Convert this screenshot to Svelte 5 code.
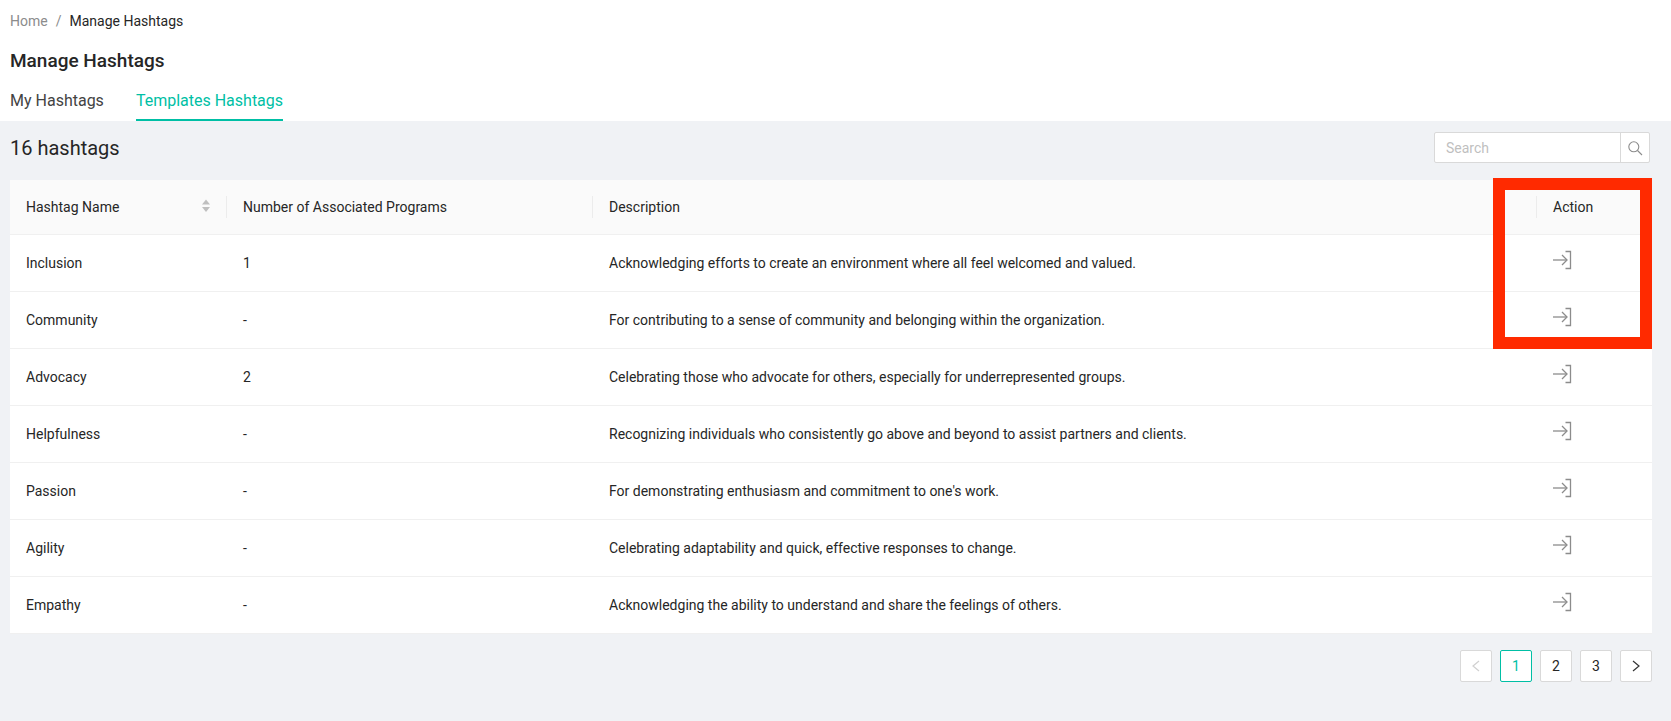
<script>
	const rows = [
		{ name: 'Inclusion', count: '1', desc: 'Acknowledging efforts to create an environment where all feel welcomed and valued.' },
		{ name: 'Community', count: '-', desc: 'For contributing to a sense of community and belonging within the organization.' },
		{ name: 'Advocacy', count: '2', desc: 'Celebrating those who advocate for others, especially for underrepresented groups.' },
		{ name: 'Helpfulness', count: '-', desc: 'Recognizing individuals who consistently go above and beyond to assist partners and clients.' },
		{ name: 'Passion', count: '-', desc: "For demonstrating enthusiasm and commitment to one's work." },
		{ name: 'Agility', count: '-', desc: 'Celebrating adaptability and quick, effective responses to change.' },
		{ name: 'Empathy', count: '-', desc: 'Acknowledging the ability to understand and share the feelings of others.' }
	];
</script>

<div class="page">
	<header class="top">
		<nav class="crumbs">
			<span class="muted">Home</span>
			<span class="muted sep">/</span>
			<span>Manage Hashtags</span>
		</nav>
		<h1>Manage Hashtags</h1>
		<div class="tabs">
			<span class="tab">My Hashtags</span>
			<span class="tab active">Templates Hashtags</span>
		</div>
	</header>

	<main class="body">
		<div class="toolbar">
			<span class="total">16 hashtags</span>
			<div class="search">
				<span class="placeholder">Search</span>
				<span class="search-btn">
					<svg width="16" height="16" viewBox="0 0 16 16" fill="none" stroke="#8c8c8c" stroke-width="1.1">
						<circle cx="6.8" cy="6.8" r="5" />
						<path d="M10.5 10.5 L15 15" />
					</svg>
				</span>
			</div>
		</div>

		<div class="table">
			<div class="row head">
				<div class="cell c1">
					Hashtag Name
					<svg class="sort" width="10" height="14" viewBox="0 0 10 14" fill="#bfbfbf">
						<path d="M5 0.5 L9 5.5 H1 Z" />
						<path d="M5 13 L9 8 H1 Z" />
					</svg>
				</div>
				<div class="cell c2">Number of Associated Programs</div>
				<div class="cell c3">Description</div>
				<div class="cell c4">Action</div>
			</div>
			{#each rows as r}
				<div class="row">
					<div class="cell c1">{r.name}</div>
					<div class="cell c2">{r.count}</div>
					<div class="cell c3">{r.desc}</div>
					<div class="cell c4">
						<svg class="go" width="20" height="20" viewBox="0 0 20 20" fill="none" stroke="#8c8c8c" stroke-width="1.3">
							<path d="M0 10 H13.5" />
							<path d="M9 5 L14 10 L9 15" />
							<path d="M12.5 1.5 H17.5 V18.5 H12.5" />
						</svg>
					</div>
				</div>
			{/each}
		</div>

		<div class="pager">
			<span class="pg off">
				<svg width="10" height="12" viewBox="0 0 10 12" fill="none" stroke="#d0d0d0" stroke-width="1.2"><path d="M8 1 L2 6 L8 11" /></svg>
			</span>
			<span class="pg current">1</span>
			<span class="pg">2</span>
			<span class="pg">3</span>
			<span class="pg">
				<svg width="10" height="12" viewBox="0 0 10 12" fill="none" stroke="#333" stroke-width="1.2"><path d="M2 1 L8 6 L2 11" /></svg>
			</span>
		</div>
	</main>

	<div class="marker"></div>
</div>

<style>
	:global(body) {
		margin: 0;
		background: #f0f2f5;
	}

	.page {
		position: relative;
		height: 721px;
		overflow: hidden;
		font-family: Roboto, 'Noto Sans', sans-serif;
		font-size: 14px;
		color: #262626;
		background: #f0f2f5;
	}

	.top {
		background: #fff;
		height: 121px;
		padding: 13px 10px 0;
		box-sizing: border-box;
	}

	.crumbs {
		display: flex;
		gap: 8px;
		line-height: 17px;
		font-size: 14px;
	}

	.muted {
		color: #8c8c8c;
	}

	h1 {
		margin: 18px 0 0;
		font-size: 19px;
		line-height: 26px;
		font-weight: 500;
		color: #262626;
	}

	.tabs {
		display: flex;
		gap: 32px;
		margin-top: 16px;
	}

	.tab {
		font-size: 16px;
		line-height: 22px;
		height: 29px;
		color: #434343;
	}

	.active {
		color: #00bfa5;
		border-bottom: 2px solid #00bfa5;
	}

	.toolbar {
		display: flex;
		align-items: center;
		justify-content: space-between;
		height: 59px;
		padding: 0 21px 6px 10px;
		box-sizing: border-box;
	}

	.total {
		font-size: 20px;
		color: #262626;
	}

	.search {
		display: flex;
		width: 216px;
		height: 31px;
		box-sizing: border-box;
		background: #fff;
		border: 1px solid #d9d9d9;
		border-radius: 2px;
	}

	.placeholder {
		flex: 1;
		padding-left: 11px;
		line-height: 31px;
		color: #bfbfbf;
	}

	.search-btn {
		display: flex;
		align-items: center;
		justify-content: center;
		width: 29px;
		box-sizing: border-box;
		border-left: 1px solid #d9d9d9;
	}

	.table {
		margin: 0 19px 0 10px;
		background: #fff;
	}

	.row {
		display: grid;
		grid-template-columns: 217px 366px 944px 115px;
		height: 57px;
		border-bottom: 1px solid #f0f0f0;
		box-sizing: border-box;
	}

	.head {
		height: 55px;
		background: #fafafa;
	}

	.cell {
		position: relative;
		display: flex;
		align-items: center;
		padding: 0 16px;
	}

	.go {
		margin-top: -6px;
	}

	.head .cell + .cell::before {
		content: '';
		position: absolute;
		left: -1px;
		top: 50%;
		height: 22px;
		margin-top: -11px;
		border-left: 1px solid #ececec;
	}

	.sort {
		margin: -2px 0 0 auto;
	}

	.pager {
		display: flex;
		justify-content: flex-end;
		gap: 8px;
		margin: 16px 19px 0 0;
	}

	.pg {
		display: flex;
		align-items: center;
		justify-content: center;
		width: 32px;
		height: 32px;
		box-sizing: border-box;
		background: #fff;
		border: 1px solid #d9d9d9;
		border-radius: 2px;
	}

	.current {
		border-color: #00bfa5;
		color: #00bfa5;
	}

	.marker {
		position: absolute;
		left: 1493px;
		top: 178px;
		width: 159px;
		height: 171px;
		box-sizing: border-box;
		border: 12px solid #ff2a00;
	}
</style>
